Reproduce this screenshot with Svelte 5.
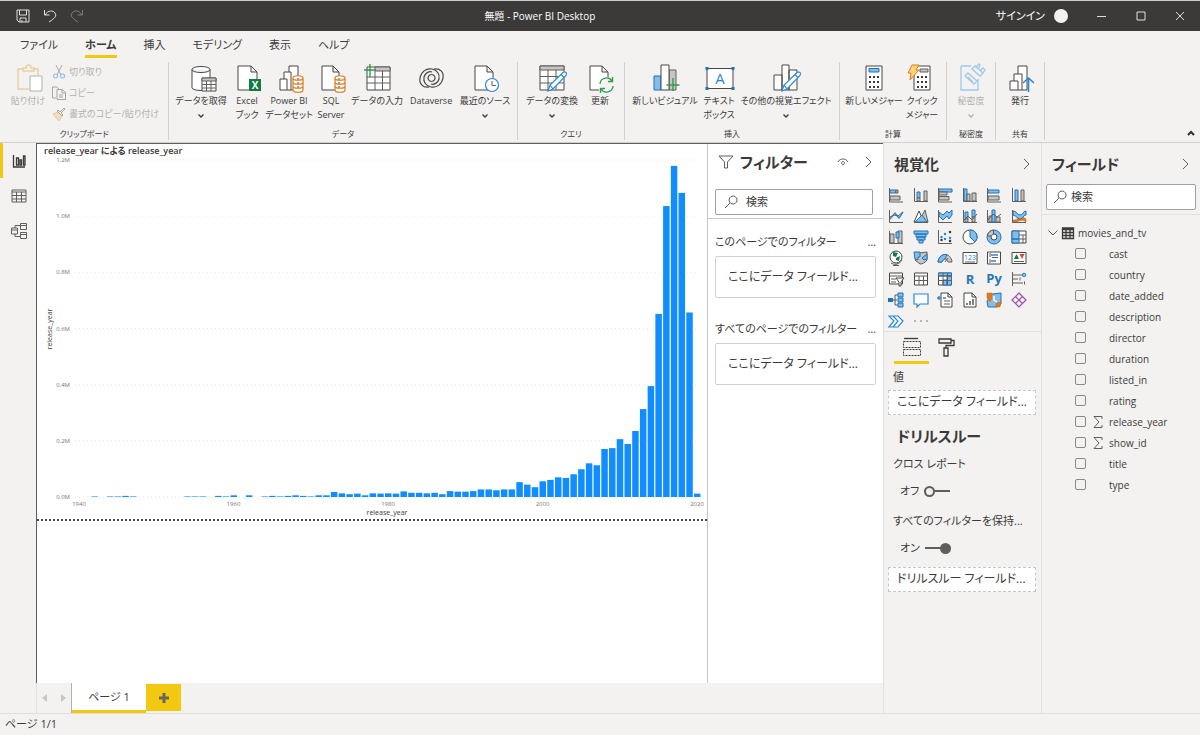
<script lang="ts">
	type Shape = [string, string] | { t: string; x: number; y: number; s: number; c: string };
	type Tool = { icon: string; lines: string[]; size: string; menu?: boolean; off?: boolean };

	const page = 'M4 2h12l6 6v18H4zM16 2v6h6';
	const pencil = 'M10 27l2-6L25 8.500q2-1 3 0t0 3L15 25zM12 21l3 4M23 10.500l3 3';
	const cylinder = 'M18 14c0-3 10-3 10 0v12c0 3-10 3-10 0zM18 14c0 3 10 3 10 0M18 18c0 3 10 3 10 0M18 22c0 3 10 3 10 0';

	const ribbonIcons: Record<string, Shape[]> = {
		paste: [['tan', 'M9 5H4v20h11M19 5h5v6M9 7V4h3c0-4 5-4 5 0h3v3z'], ['pale', 'M16 12h12v15H16z']],
		getData: [['paper', 'M5 5.500v18c0 4 18 4 18 0v-18M5 5.500c0-4 18-4 18 0s-18 4-18 0'], ['paper', 'M15 14h14v13H15z'], ['gray', 'M15 14h14v3H15z'], ['line', 'M15 20.500h14M15 24h14M19.500 17v10M24 17v10']],
		excel: [['paper', 'M5 2h13l6 6v18H5zM18 2v6h6'], ['green', 'M16 15h12v12H16z'], { t: 'X', x: 22, y: 25, s: 10, c: 'white' }],
		dataset: [['paper', 'M5 15h7v11H5zM9 15V8h7v18h-4M14 8V2h9v24h-7'], ['amber', cylinder]],
		sql: [['paper', 'M5 2h11l6 6v18H5zM16 2v6h6'], ['amber', cylinder]],
		enter: [['paper', 'M4 3h23v23H4z'], ['gray', 'M12 3h15v4H12z'], ['line', 'M4 13h23M4 19h23M12 7v19M19.500 7v19'], ['plus', 'M7 0v13M1 6h12']],
		dataverse: [['swirl', 'M12 23C6 24 2 20 3 14 4 8 9 4 15 5c5 1 8 5 7 10-1 4-5 6-8 5'], ['swirl', 'M17 5c6-1 10 3 9 9-1 6-6 10-12 9-5-1-8-5-7-10 1-4 5-6 8-5'], ['swirl', 'M14.500 10.500a3.500 3.500 0 1 0 .1 0']],
		recent: [['paper', page], ['bluePaper', 'M21 14.500a6.500 6.500 0 1 1 0 13 6.500 6.500 0 0 1 0-13z'], ['line', 'M21 17v4.500h4']],
		transform: [['paper', 'M2 2h24v24H2z'], ['gray', 'M2 2h24v4H2z'], ['line', 'M2 12.500h24M2 19h24M10 6v20M18 6v20'], ['bluePaper', pencil]],
		refresh: [['paper', 'M13 26H4V2h12l6 6v5M16 2v6h6'], ['greenLine', 'M14 20a6.500 6.500 0 0 1 12-3M26.500 13v4.500H22M27 22a6.500 6.500 0 0 1-12 3M14.500 29v-4.500H19']],
		visual: [['gray', 'M18 6h7v20h-7z'], ['sky', 'M3 12h7v14H3z'], ['paper', 'M10 1h8v25h-8z'], ['plus', 'M22 14v13M15.500 21h13']],
		textBox: [['paper', 'M2 4.500h26v20H2z'], ['blue', 'M.500 3h3v3h-3zM26.500 3h3v3h-3zM.500 23h3v3h-3zM26.500 23h3v3h-3z'], { t: 'A', x: 15, y: 20, s: 15, c: 'blueText' }],
		moreVisuals: [['paper', 'M2 11h8v15H2zM17 6h8v20h-8zM10 1h7v25h-7z'], ['bluePaper', pencil]],
		calculator: [['paper', 'M6 2h16v24H6z'], ['sky', 'M9 4.500h10V8H9z'], ['dots', 'M9 13h10M9 18h10M9 23h10']],
		quick: [['paper', 'M6 2h16v24H6z'], ['gray', 'M12 5h8v3h-8z'], ['dots', 'M9 13h10M9 18h10M9 23h10'], ['bolt', 'M4 1h7L8 6h3L2 16l1-7H0z']],
		sensitivity: [['paleBlue', 'M4 2h10M21 15v11H4V2M8 12l3-3 9 8-3 3zM11 13l5 5M15 5l3-3 8 7-3 3zM19 3l3-3 1 1-1 3M23 7l3-3 2 2-2 3']],
		publish: [['paper', 'M4 17h8v9H4zM8 17v-7h8v16h-4M12 10V2h9v24h-5'], ['arrow', 'M22.500 28V14M17 19l5.500-5 5.500 5']]
	};

	const groups: { label: string; tools: Tool[] }[] = [
		{
			label: 'データ',
			tools: [
				{ icon: 'getData', lines: ['データを取得'], size: 'md', menu: true },
				{ icon: 'excel', lines: ['Excel', 'ブック'], size: 'xs' },
				{ icon: 'dataset', lines: ['Power BI', 'データセット'], size: 'sm' },
				{ icon: 'sql', lines: ['SQL', 'Server'], size: 'xs' },
				{ icon: 'enter', lines: ['データの入力'], size: 'md' },
				{ icon: 'dataverse', lines: ['Dataverse'], size: 'md' },
				{ icon: 'recent', lines: ['最近のソース'], size: 'md', menu: true }
			]
		},
		{
			label: 'クエリ',
			tools: [
				{ icon: 'transform', lines: ['データの変換'], size: 'ml', menu: true },
				{ icon: 'refresh', lines: ['更新'], size: 'xs' }
			]
		},
		{
			label: '挿入',
			tools: [
				{ icon: 'visual', lines: ['新しいビジュアル'], size: 'lg' },
				{ icon: 'textBox', lines: ['テキスト', 'ボックス'], size: 'xs' },
				{ icon: 'moreVisuals', lines: ['その他の視覚エフェクト'], size: 'xl', menu: true }
			]
		},
		{
			label: '計算',
			tools: [
				{ icon: 'calculator', lines: ['新しいメジャー'], size: 'ml' },
				{ icon: 'quick', lines: ['クイック', 'メジャー'], size: 'xs' }
			]
		},
		{ label: '秘密度', tools: [{ icon: 'sensitivity', lines: ['秘密度'], size: 'xs', menu: true, off: true }] },
		{ label: '共有', tools: [{ icon: 'publish', lines: ['発行'], size: 'xs' }] }
	];

	const menus = ['ファイル', 'ホーム', '挿入', 'モデリング', '表示', 'ヘルプ'];
	let activeMenu = $state('ホーム');

	const visuals: { name: string; shapes: Shape[] }[] = [
		{ name: '積み上げ横棒グラフ', shapes: [['sky', 'M2 3h6v3H2z'], ['gray', 'M8 3h2v3H8zM2 9h10v4H2z'], ['line', 'M1.500 1v14H15']] },
		{ name: '積み上げ縦棒グラフ', shapes: [['sky', 'M4 5h3v6H4z'], ['gray', 'M4 11h3v3H4zM11 4h3v10h-3z'], ['line', 'M1.500 1v13.500H15']] },
		{ name: '集合横棒グラフ', shapes: [['sky', 'M2 2h13v3H2z'], ['gray', 'M2 5h8v3H2zM2 9.500h10V13H2z'], ['line', 'M1.500 1v14H15']] },
		{ name: '集合縦棒グラフ', shapes: [['sky', 'M2 2h3v12H2z'], ['gray', 'M5 7h3v7H5zM10 6h4v8h-4z'], ['line', 'M1.500 1v13.500H15']] },
		{ name: '100% 積み上げ横棒グラフ', shapes: [['sky', 'M2 3h11v3H2z'], ['gray', 'M2 9h11v4H2z'], ['line', 'M1.500 1v14H15']] },
		{ name: '100% 積み上げ縦棒グラフ', shapes: [['sky', 'M4 3h3v11H4z'], ['gray', 'M10 3h3v11h-3z'], ['line', 'M1.500 1v13.500H15']] },
		{ name: '折れ線グラフ', shapes: [['blueLine', 'M2 11l5-6 4 5 4-6'], ['line', 'M1.500 2v12.500H15M2 9l4-2 4 1 5-4']] },
		{ name: '面グラフ', shapes: [['gray', 'M6 14L12 2l3 12z'], ['paper', 'M1 14L6 3l5 11z'], ['sky', 'M2 14l7-7 5 7z'], ['line', 'M1 14.500h14']] },
		{ name: '積み上げ面グラフ', shapes: [['sky', 'M2 4l4 3 4-4 2 2 3-3v5l-3 4-2-3-4 4-4-4z'], ['line', 'M1.500 2v12.500H15']] },
		{ name: '折れ線および積み上げ縦棒', shapes: [['sky', 'M3 4h3v7H3zM10 2h3v7h-3z'], ['gray', 'M3 11h3v3H3zM10 9h3v5h-3z'], ['line', 'M1.500 2v12.500H15M2 12l4-4 4 4 5-6']] },
		{ name: '折れ線および集合縦棒', shapes: [['gray', 'M3 8h3v6H3zM10 9h4v5h-4z'], ['sky', 'M6 2h3v12H6z'], ['line', 'M1.500 2v12.500H15M2 12l5-6 4 3 4-3']] },
		{ name: 'リボン グラフ', shapes: [['orange', 'M2 12c5 0 8-5 13-1v3c-5-4-8 1-13 0z'], ['sky', 'M2 3c4 0 4 4 7 4s3-4 6-4v4c-3 0-3 4-6 4S6 8 2 7z'], ['line', 'M1.500 2v12.500H15']] },
		{ name: 'ウォーターフォール', shapes: [['gray', 'M2 5h4v9H2zM10 2h4v12h-4z'], ['sky', 'M8 3h3v6H8z'], ['line', 'M1.500 2v12.500H15']] },
		{ name: 'じょうごグラフ', shapes: [['sky', 'M1 2h14v3H1zM3 5h10v3H3zM4 8h8v3H4zM6 11h4v3H6z']] },
		{ name: '散布図', shapes: [['line', 'M1.500 1v13.500H15'], ['blueDot', 'M8 5v.1M4.500 8v.1M8 10v.1M13 9v.1'], ['darkDot', 'M13 3v.1M4.500 11v.1M13 12v.1']] },
		{ name: '円グラフ', shapes: [['paper', 'M8 1a7 7 0 1 0 0 14A7 7 0 0 0 8 1z'], ['sky', 'M8 1a7 7 0 0 1 5 12L8 8z']] },
		{ name: 'ドーナツ グラフ', shapes: [['sky', 'M8 1a7 7 0 1 0 0 14A7 7 0 0 0 8 1z'], ['paper', 'M8 5a3 3 0 1 0 0 6 3 3 0 0 0 0-6z'], ['gray', 'M1.500 7a7 7 0 0 1 6-6v4L5 7z']] },
		{ name: 'ツリーマップ', shapes: [['paper', 'M1 2h14v12H1z'], ['sky', 'M1 2h7v8H1zM1 10h7v4H1z'], ['line', 'M8 6h7M8 10h7M12 6v8']] },
		{ name: 'マップ', shapes: [['paper', 'M8 1a6 6 0 1 0 0 12A6 6 0 0 0 8 1z'], ['green', 'M5 2l5 1-2 4-3-1zM8 8l4-2-1 5-3-1z'], ['line', 'M3 13c3 2 8 2 11-3M8 14v2M5 15.500h6']] },
		{ name: '塗り分け地図', shapes: [['gray', 'M6 3l8-1v8c-2 3-5 4-7 4L2 10z'], ['sky', 'M1 2h6v5H5v3L2 9zM9 8l5-4v5l-3 1z']] },
		{ name: 'ゲージ', shapes: [['gray', 'M1 12C2 2 14 2 15 12h-4c-1-4-5-4-6 0z'], ['sky', 'M1 12C2 6 6 4 10 4.500L8 9q-2 0-3 3z'], ['line', 'M8 12l3-4']] },
		{ name: 'カード', shapes: [['paper', 'M1 2.500h14v11H1z'], ['line', 'M3 12h10'], { t: '123', x: 8, y: 10, s: 7, c: 'blueText' }] },
		{ name: '複数の行カード', shapes: [['paper', 'M1.500 2h13v12h-13z'], ['blueLine', 'M5 5h7M5 11h5'], ['line', 'M4 3v4M4 9v4M6 7.500h6']] },
		{ name: 'KPI', shapes: [['paper', 'M1 2.500h14v11H1z'], ['green', 'M3 9l2.500-5L8 9z'], ['red', 'M8.500 4h5L11 9z'], ['line', 'M3 11.500h10']] },
		{ name: 'スライサー', shapes: [['paper', 'M1.500 2h13v11h-13z'], ['line', 'M2 5h12M3 8h5M3 11h5'], ['paper', 'M8 7h8l-3 4v4h-2v-4z']] },
		{ name: 'テーブル', shapes: [['paper', 'M1.500 2h13v12h-13z'], ['line', 'M1.500 5h13M1.500 9.500h13M6 5v9M10.500 5v9']] },
		{ name: 'マトリックス', shapes: [['paper', 'M1.500 2h13v12h-13z'], ['sky', 'M1.500 2h13v3h-13zM10 5h4.500v9H10zM6 9h4v5H6z'], ['line', 'M1.500 5h13M1.500 9.500h13M6 2v12M10.500 2v12']] },
		{ name: 'R スクリプト ビジュアル', shapes: [{ t: 'R', x: 8, y: 13, s: 13, c: 'boldBlue' }] },
		{ name: 'Python ビジュアル', shapes: [{ t: 'Py', x: 8, y: 12, s: 13, c: 'boldBlue' }] },
		{ name: '主要なインフルエンサー', shapes: [['line', 'M1.500 1v14M2 4h9M2 8h5M2 12h10M9 6.500v3M13.500 10.500v3'], ['blueLine', 'M13 2.500a1.500 1.500 0 1 0 .1 0']] },
		{ name: '分解ツリー', shapes: [['line', 'M4 8h5M7 3v10M7 3h3M7 13h3'], ['blue', 'M0 6h5v4H0z'], ['sky', 'M10 1h5v4h-5zM10 6h5v4h-5zM10 11h5v4h-5z']] },
		{ name: 'Q&A', shapes: [['bluePaper', 'M1 2h14v10H7l-3 3v-3H1z']] },
		{ name: 'スマート ナラティブ', shapes: [['paper', 'M4 1h7l4 4v10H4zM11 1v4h4'], ['blueLine', 'M0 6h4M2 4v4M6 6h3'], ['line', 'M7 9h6M7 12h6']] },
		{ name: 'ページ割り付けレポート', shapes: [['paper', 'M2 1h8l4 4v10H2zM10 1v4h4'], ['darkLine', 'M5 11v2M8 9v4M11 7v6']] },
		{ name: 'ArcGIS Maps', shapes: [['sky', 'M1 9l5-7 9-1v11l-4 3H2z'], ['orange', 'M1 1h5v5l-2 4-3-4zM10 11l5-1-1 5h-4z'], ['whiteLine', 'M8 4v4l3 2']] },
		{ name: 'Power Apps', shapes: [['purple', 'M8 1l7 7-7 7-7-7zM4.500 4.500l7 7M11.500 4.500l-7 7']] },
		{ name: 'Power Automate', shapes: [['bluePaper', 'M1 3h9l5 5-5 6H1l5-6zM5 3l5 5-5 6']] }
	];

	const fields = [
		'cast', 'country', 'date_added', 'description', 'director', 'duration',
		'listed_in', 'rating', 'release_year', 'show_id', 'title', 'type'
	];
	const numeric = ['release_year', 'show_id'];

	// year -> total, in thousands
	const early: [number, number][] = [
		[1942, 2], [1944, 2], [1945, 2], [1946, 4], [1947, 2], [1954, 2], [1955, 2], [1956, 2],
		[1958, 4], [1959, 2], [1960, 6], [1962, 6], [1964, 2], [1965, 4], [1966, 2], [1967, 4],
		[1968, 6], [1969, 4], [1970, 2], [1971, 6], [1972, 6]
	];
	const since1973 = [
		18, 13, 10, 12, 6, 13, 12, 13, 12, 20, 15, 15, 13, 15, 10, 21, 19, 19, 21, 27, 27, 24, 27, 27,
		53, 44, 35, 56, 61, 70, 68, 81, 99, 120, 113, 171, 174, 206, 189, 235, 313, 395, 652, 1036,
		1179, 1083, 657, 12
	];
	const bars = [...early, ...since1973.map((v, i): [number, number] => [1973 + i, v])];

	const base = 353;
	const xOf = (year: number) => 42 + ((year - 1940) * 618) / 80;
	const yOf = (v: number) => base - (v * 337) / 1200;
</script>

{#snippet icon(shapes: Shape[], size: number)}
	<svg class="icon" width={size} height={size} viewBox="0 0 {size} {size}" aria-hidden="true">
		{#each shapes as s}
			{#if Array.isArray(s)}
				<path class={s[0]} d={s[1]} />
			{:else}
				<text class={s.c} x={s.x} y={s.y} font-size={s.s} text-anchor="middle">{s.t}</text>
			{/if}
		{/each}
	</svg>
{/snippet}

{#snippet chevron()}
	<svg width="8" height="12" viewBox="0 0 8 12" aria-hidden="true"><path class="line" d="M1 1l5 5-5 5" /></svg>
{/snippet}

{#snippet search(id: string)}
	<div class="search">
		<label for={id} aria-label="検索">
			<svg width="14" height="14" viewBox="0 0 14 14"><path class="line" d="M9 1a4 4 0 1 0 .1 0M6 8l-5 5" /></svg>
		</label>
		<input {id} type="text" placeholder="検索" />
	</div>
{/snippet}

<div class="app">
	<header class="titlebar">
		<div class="quick-access">
			<button aria-label="保存">
				<svg width="14" height="14" viewBox="0 0 14 14"><path d="M1 1h12v12H3l-2-2zM3.500 1v5h7V1M4 13V9h6v4M6 13v-2" /></svg>
			</button>
			<button aria-label="元に戻す">
				<svg width="14" height="14" viewBox="0 0 14 14"><path d="M1.500 1v5h5M2 6c3-5 8-5 10-2s0 5-6 9" /></svg>
			</button>
			<button aria-label="やり直し" class="dim">
				<svg width="14" height="14" viewBox="0 0 14 14"><path d="M12.500 1v5h-5M12 6C9 1 4 1 2 4s0 5 6 9" /></svg>
			</button>
		</div>
		<h1>無題 - Power BI Desktop</h1>
		<div class="window-controls">
			<button class="signin">サインイン <span class="avatar"></span></button>
			<button aria-label="最小化"><svg width="10" height="10" viewBox="0 0 10 10"><path d="M0 5.500h9" /></svg></button>
			<button aria-label="最大化"><svg width="10" height="10" viewBox="0 0 10 10"><path d="M1 1h8v8H1z" /></svg></button>
			<button aria-label="閉じる"><svg width="10" height="10" viewBox="0 0 10 10"><path d="M1 1l8 8M9 1L1 9" /></svg></button>
		</div>
	</header>

	<nav class="menus">
		{#each menus as menu}
			<button class:active={menu === activeMenu} onclick={() => (activeMenu = menu)}>{menu}</button>
		{/each}
	</nav>

	<div class="ribbon">
		<section class="group">
			<div class="tools">
				<button class="tool off sm" disabled>
					{@render icon(ribbonIcons.paste, 28)}
					<span>貼り付け</span>
				</button>
				<div class="clip-list">
					<button disabled>
						<svg width="14" height="14" viewBox="0 0 14 14"><path class="line" d="M4 0l5 10M10 0L5 10" /><path class="bluePaper" d="M3.500 9a2 2 0 1 0 .1 0M10.500 9a2 2 0 1 0 .1 0" /></svg>
						切り取り
					</button>
					<button disabled>
						<svg width="14" height="14" viewBox="0 0 14 14"><path class="line" d="M4 12H.500V1H5l2 2M5 3.500h5l3.500 3v7H5zM10 4v3h3M7 9h4M7 11h4" /></svg>
						コピー
					</button>
					<button disabled>
						<svg width="14" height="14" viewBox="0 0 14 14"><path class="amberFill" d="M1 7l5-2 4 4-3 5z" /><path class="line" d="M5 4l5 5 1-1-2-2 4-4-1-1-4 4-2-2z" /></svg>
						書式のコピー/貼り付け
					</button>
				</div>
			</div>
			<h2>クリップボード</h2>
		</section>
		{#each groups as group}
			<section class="group">
				<div class="tools">
					{#each group.tools as tool}
						<button class="tool {tool.size}" class:off={tool.off} disabled={tool.off}>
							{@render icon(ribbonIcons[tool.icon], 28)}
							{#each tool.lines as line}
								<span>{line}</span>
							{/each}
							{#if tool.menu}
								<svg class="drop" width="6" height="4" viewBox="0 0 6 4" aria-hidden="true"><path d="M.500.500L3 3 5.500.500" /></svg>
							{/if}
						</button>
					{/each}
				</div>
				<h2>{group.label}</h2>
			</section>
		{/each}
		<button class="collapse" aria-label="リボンを折りたたむ">
			<svg width="8" height="6" viewBox="0 0 8 6"><path d="M1 5l3-3 3 3" /></svg>
		</button>
	</div>

	<div class="body">
		<nav class="rail">
			<button class="active" aria-label="レポート">
				<svg width="14" height="14" viewBox="0 0 14 14"><path class="darkLine" d="M1.500 1v12H13M4.500 11V4h2v7zM8 11V6h1.500v5zM11.500 11V2h1.500v9z" /></svg>
			</button>
			<button aria-label="データ">
				<svg width="16" height="14" viewBox="0 0 16 14"><path class="line" d="M1 1h14v12H1zM1 3h14M1 6.500h14M1 10h14M5.500 3v10M10.500 3v10" /></svg>
			</button>
			<button aria-label="モデル">
				<svg width="16" height="16" viewBox="0 0 16 16"><path class="line" d="M.500 5h6v6h-6zM.500 7h6M9.500.500h6v6h-6zM9.500 2.500h6M9.500 9.500h6v6h-6zM9.500 11.500h6M4 5V2.500h5.500M4 11v2.500h5.500" /></svg>
			</button>
		</nav>

		<main>
			<div class="workspace">
				<div class="canvas">
					<svg class="chart" viewBox="0 0 670 375" role="img" aria-label="release_year による release_year">
						<text class="chart-title" x="7" y="10">release_year による release_year</text>
						{#each [0, 200, 400, 600, 800, 1000, 1200] as tick}
							<line class="grid-line" x1="38" x2="661" y1={yOf(tick)} y2={yOf(tick)} />
							<text class="tick" x="33" y={yOf(tick) + 2} text-anchor="end">{(tick / 1000).toFixed(1)}M</text>
						{/each}
						{#each bars as [year, total]}
							<rect class="bar" x={xOf(year) - 3} y={yOf(total)} width="6.500" height={base - yOf(total)} />
						{/each}
						{#each [1940, 1960, 1980, 2000, 2020] as year}
							<text class="tick" x={xOf(year)} y="362" text-anchor="middle">{year}</text>
						{/each}
						<text class="axis" x="350" y="371" text-anchor="middle">release_year</text>
						<text class="axis" transform="translate(15 185) rotate(-90)" text-anchor="middle">release_year</text>
					</svg>
				</div>

				<aside class="filters">
					<div class="pane-head">
						<svg width="16" height="14" viewBox="0 0 16 14" aria-hidden="true"><path class="line" d="M1 1h14L9.500 7v6h-3V7z" /></svg>
						<h2>フィルター</h2>
						<button aria-label="フィルターの表示">
							<svg width="12" height="8" viewBox="0 0 12 8"><path class="line" d="M1 4c2-4 8-4 10 0M6 3.500a1.500 1.500 0 1 0 .1 0" /></svg>
						</button>
						<button aria-label="折りたたむ">{@render chevron()}</button>
					</div>
					{@render search('filter-search')}
					<div class="filter-list">
						<div class="filter-label"><h3>このページでのフィルター</h3><button aria-label="その他">…</button></div>
						<div class="well">ここにデータ フィールド...</div>
						<div class="filter-label"><h3>すべてのページでのフィルター</h3><button aria-label="その他">…</button></div>
						<div class="well">ここにデータ フィールド...</div>
					</div>
				</aside>
			</div>

			<div class="pages">
				<div class="page-nav">
					<button aria-label="前のページ"><svg width="5" height="8" viewBox="0 0 5 8"><path d="M5 0v8L0 4z" /></svg></button>
					<button aria-label="次のページ"><svg width="5" height="8" viewBox="0 0 5 8"><path d="M0 0v8l5-4z" /></svg></button>
				</div>
				<button class="page-tab">ページ 1</button>
				<button class="add-page" aria-label="新しいページ">
					<svg width="10" height="10" viewBox="0 0 10 10"><path d="M5 0v10M0 5h10" /></svg>
				</button>
			</div>
		</main>

		<aside class="visuals">
			<div class="pane-head">
				<h2>視覚化</h2>
				<button aria-label="折りたたむ">{@render chevron()}</button>
			</div>
			<div class="gallery">
				{#each visuals as visual}
					<button aria-label={visual.name}>{@render icon(visual.shapes, 16)}</button>
				{/each}
				<button aria-label="その他のビジュアル">
					<svg width="16" height="16" viewBox="0 0 16 16"><path class="ellipsis" d="M2 8v.1M8 8v.1M14 8v.1" /></svg>
				</button>
			</div>
			<div class="pane-tabs">
				<button class="active" aria-label="フィールド">
					<svg width="18" height="20" viewBox="0 0 18 20"><path class="darkLine" d="M1 1.500h14" /><path class="dashed" d="M.500 4.500h17v6H.500zM.500 12.500h17v6H.500z" /></svg>
				</button>
				<button aria-label="書式">
					<svg width="18" height="20" viewBox="0 0 18 20"><path class="darkLine" d="M1 2h12v4H1zM13 3.500h3v5H8V11M6 11h4v8H6z" /></svg>
				</button>
			</div>
			<div class="settings">
				<h3>値</h3>
				<div class="drop-well">ここにデータ フィールド...</div>
				<h2>ドリルスルー</h2>
				<h3>クロス レポート</h3>
				<label class="switch">オフ <input type="checkbox" role="switch" /></label>
				<h3>すべてのフィルターを保持...</h3>
				<label class="switch">オン <input type="checkbox" role="switch" checked /></label>
				<div class="drop-well">ドリルスルー フィールド...</div>
			</div>
		</aside>

		<aside class="fields">
			<div class="pane-head">
				<h2>フィールド</h2>
				<button aria-label="折りたたむ">{@render chevron()}</button>
			</div>
			{@render search('field-search')}
			<div class="tree">
				<button class="table-name">
					<svg width="10" height="6" viewBox="0 0 10 6" aria-hidden="true"><path class="line" d="M.500.500L5 5 9.500.500" /></svg>
					<svg width="12" height="12" viewBox="0 0 12 12" aria-hidden="true"><path class="darkLine" d="M.500 1h11v10.500H.500zM.500 2.500h11M.500 5.500h11M.500 8.500h11M4 3v8M8 3v8" /></svg>
					movies_and_tv
				</button>
				{#each fields as field}
					<label class="field">
						<input type="checkbox" />
						<span class="sigma">
							{#if numeric.includes(field)}
								<svg width="10" height="12" viewBox="0 0 10 12" aria-hidden="true"><path class="line" d="M9 3V.500H1L6 6l-5 5.500h8V9" /></svg>
							{/if}
						</span>
						{field}
					</label>
				{/each}
			</div>
		</aside>
	</div>

	<footer>ページ 1/1</footer>
</div>

<style>
	:global(body) {
		margin: 0;
	}

	.app {
		display: flex;
		flex-direction: column;
		height: 100vh;
		box-sizing: border-box;
		border-top: 1px solid #c8cfcc;
		background: #f3f2f1;
		color: #3b3a39;
		font-family: 'Open Sans', 'Noto Sans CJK JP', sans-serif;
		font-feature-settings: 'palt';
		font-size: 11px;
		line-height: 14px;
		white-space: nowrap;
	}

	h1, h2, h3 {
		margin: 0;
		font-size: inherit;
		font-weight: 400;
	}

	button {
		display: flex;
		align-items: center;
		justify-content: center;
		padding: 0;
		border: none;
		background: none;
		color: inherit;
		font: inherit;
		font-feature-settings: inherit;
		white-space: nowrap;
		cursor: pointer;
	}

	svg {
		display: block;
		flex-shrink: 0;
		overflow: visible;
		fill: none;
	}

	/* ── Icon strokes and fills ── */
	.line { fill: none; stroke: #605e5c; }
	.darkLine { fill: none; stroke: #3b3a39; stroke-width: 1.3; }
	.paper { fill: #fff; stroke: #484644; }
	.gray { fill: #c8c6c4; stroke: #605e5c; }
	.sky { fill: #83bde9; stroke: #1f73b7; }
	.blue { fill: #1f73b7; }
	.blueLine { fill: none; stroke: #2b88d8; stroke-width: 1.4; }
	.bluePaper { fill: #fff; stroke: #2b88d8; stroke-width: 1.2; }
	.amber { fill: #fff; stroke: #e07b1a; stroke-width: 1.2; }
	.amberFill { fill: #f3c98b; stroke: #e0a04a; }
	.orange { fill: #e07b1a; stroke: #d06a10; stroke-width: 0.5; }
	.green { fill: #107c41; }
	.red { fill: #e0403a; }
	.greenLine, .plus { fill: none; stroke: #2e9c4c; stroke-width: 1.4; }
	.arrow { fill: none; stroke: #2b88d8; stroke-width: 1.6; }
	.swirl { fill: none; stroke: #484644; stroke-width: 1.2; }
	.bolt { fill: #ffd479; stroke: #e07b1a; }
	.tan { fill: none; stroke: #e9cfa4; stroke-width: 1.5; }
	.pale { fill: #fff; stroke: #b3b0ad; }
	.paleBlue { fill: none; stroke: #9ec9ea; stroke-width: 1.3; }
	.purple { fill: none; stroke: #9b4fa8; stroke-width: 1.2; }
	.whiteLine { fill: none; stroke: #fff; stroke-width: 1.5; }
	.dots { fill: none; stroke: #3b3a39; stroke-width: 2; stroke-dasharray: 2 2; }
	.blueDot, .darkDot { stroke: #2b88d8; stroke-width: 2.5; stroke-linecap: round; }
	.darkDot { stroke: #3b3a39; }
	.ellipsis { stroke: #605e5c; stroke-width: 1.5; stroke-linecap: round; }
	.dashed { stroke: #3b3a39; stroke-dasharray: 2 1; }
	.white { fill: #fff; font-weight: 700; }
	.blueText { fill: #2b88d8; }
	.boldBlue { fill: #2775b8; font-weight: 700; }

	/* ── Title bar ── */
	.titlebar {
		display: flex;
		align-items: center;
		height: 30px;
		flex-shrink: 0;
		background: #3b3a39;
		color: #f3f2f1;
	}

	.titlebar h1 {
		flex: 1;
		font-size: 10px;
		text-align: center;
		color: #fff;
	}

	.titlebar svg {
		stroke: #e1dfdd;
	}

	.quick-access {
		display: flex;
		gap: 13px;
		padding-left: 16px;
	}

	.quick-access .dim {
		opacity: 0.4;
	}

	.window-controls {
		display: flex;
		align-items: center;
		gap: 29px;
		padding-right: 15px;
	}

	.signin {
		gap: 9px;
		color: #fff;
	}

	.avatar {
		width: 14px;
		height: 14px;
		border-radius: 50%;
		background: #f3f2f1;
	}

	/* ── Ribbon ── */
	.menus {
		display: flex;
		gap: 27px;
		height: 27px;
		flex-shrink: 0;
		padding-left: 20px;
	}

	.menus button {
		padding-top: 3px;
		border-bottom: 3px solid transparent;
	}

	.menus .active {
		border-bottom-color: #f2c811;
		font-weight: 700;
	}

	.ribbon {
		display: flex;
		flex-shrink: 0;
		height: 78px;
		padding: 4px 0 2px;
		border-bottom: 1px solid #d2d0ce;
		font-size: 9px;
	}

	.group {
		display: flex;
		flex-direction: column;
		padding: 2px 5px 0;
		border-right: 1px solid #d2d0ce;
	}

	.group h2 {
		margin-top: auto;
		font-size: 8px;
		line-height: 12px;
		text-align: center;
	}

	.tools {
		display: flex;
		align-items: flex-start;
	}

	.tool {
		flex-direction: column;
	}

	.tool .icon {
		margin-bottom: 2px;
	}

	.xs { width: 38px; }
	.sm { width: 46px; }
	.md { width: 54px; }
	.ml { width: 58px; }
	.lg { width: 70px; }
	.xl { width: 96px; }

	.off {
		color: #b3b0ad;
	}

	.drop {
		margin-top: 6px;
		stroke: currentColor;
		stroke-width: 1.3;
	}

	.clip-list {
		display: flex;
		flex-direction: column;
		align-items: flex-start;
		gap: 7px;
		padding: 1px 4px 0 1px;
	}

	.clip-list button {
		gap: 3px;
		color: #b3b0ad;
	}

	.clip-list svg {
		opacity: 0.5;
	}

	.collapse {
		align-self: flex-end;
		margin: 0 5px 4px auto;
	}

	.collapse svg {
		stroke: #323130;
		stroke-width: 2;
	}

	/* ── Body ── */
	.body {
		display: flex;
		flex: 1;
		min-height: 0;
	}

	.rail {
		width: 36px;
	}

	.rail button {
		box-sizing: border-box;
		width: 100%;
		height: 35px;
		border-left: 3px solid transparent;
		padding-right: 2px;
	}

	.rail .active {
		border-left-color: #f2c811;
	}

	main {
		display: flex;
		flex-direction: column;
		flex: 1;
		min-width: 0;
	}

	.workspace {
		display: flex;
		flex: 1;
		min-height: 0;
		border-top: 1px solid #605e5c;
		border-left: 1px solid #605e5c;
		background: #fff;
	}

	.canvas {
		flex: 1;
		min-width: 0;
	}

	.chart {
		width: 100%;
		border-bottom: 2px dotted #484644;
	}

	.chart-title {
		fill: #3b3a39;
		font-size: 9px;
		font-weight: 600;
	}

	.tick {
		fill: #777;
		font-size: 6px;
	}

	.axis {
		fill: #3b3a39;
		font-size: 7px;
	}

	.grid-line {
		stroke: #e6e6e6;
		stroke-dasharray: 1 3;
	}

	.bar {
		fill: #118dff;
	}

	/* ── Panes ── */
	.pane-head {
		display: flex;
		align-items: center;
		height: 41px;
	}

	.pane-head h2 {
		flex: 1;
		font-size: 15px;
		font-weight: 700;
	}

	.search {
		display: flex;
		align-items: center;
		box-sizing: border-box;
		height: 26px;
		border: 1px solid #a19f9d;
		border-radius: 2px;
		background: #fff;
	}

	.search label {
		padding: 0 8px;
	}

	.search input {
		flex: 1;
		min-width: 0;
		padding: 0;
		border: none;
		outline: none;
		background: none;
		color: inherit;
		font: inherit;
	}

	.search input::placeholder {
		color: #3b3a39;
		opacity: 1;
	}

	.filters {
		width: 175px;
		border-left: 1px solid #c8c6c4;
	}

	.filters .pane-head {
		gap: 6px;
		height: 36px;
		margin-bottom: 9px;
		padding: 0 10px;
	}

	.filters .pane-head button:last-child {
		margin-left: 10px;
	}

	.filters .search {
		margin: 0 10px 3px 7px;
	}

	.filter-list {
		padding: 16px 7px 0;
		border-top: 1px solid #c8c6c4;
	}

	.filter-label {
		display: flex;
		justify-content: space-between;
		margin-bottom: 7px;
	}

	.well {
		display: flex;
		align-items: center;
		box-sizing: border-box;
		height: 42px;
		margin-bottom: 24px;
		padding-left: 12px;
		border: 1px solid #d2d0ce;
		border-radius: 2px;
		font-size: 12px;
	}

	.pages {
		display: flex;
		height: 30px;
		flex-shrink: 0;
		border-left: 1px solid #e1dfdd;
	}

	.page-nav {
		display: flex;
		justify-content: center;
		gap: 14px;
		width: 34px;
		border-right: 1px solid #b3b0ad;
	}

	.page-nav svg {
		fill: #c8c6c4;
	}

	.page-tab {
		width: 74px;
		border-bottom: 3px solid #f2c811;
		background: #fff;
	}

	.add-page {
		width: 35px;
		margin: 1px 0 2px;
		background: #f2c811;
	}

	.add-page svg {
		stroke: #6b6558;
		stroke-width: 3;
	}

	.visuals {
		box-sizing: border-box;
		width: 158px;
		border-left: 1px solid #e1dfdd;
	}

	.visuals .pane-head {
		padding: 0 10px;
	}

	.gallery {
		display: grid;
		grid-template-columns: repeat(6, 1fr);
		grid-auto-rows: 21px;
		padding-right: 10px;
		border-bottom: 1px solid #e1dfdd;
	}

	.pane-tabs {
		display: flex;
		padding-left: 10px;
	}

	.pane-tabs button {
		box-sizing: border-box;
		width: 35px;
		height: 32px;
		border-bottom: 3px solid transparent;
	}

	.pane-tabs .active {
		border-bottom-color: #f2c811;
	}

	.settings {
		display: flex;
		flex-direction: column;
		padding: 6px 5px 0 4px;
	}

	.settings h3 {
		padding-left: 5px;
	}

	.settings h2 {
		padding: 14px 0 14px 9px;
		font-size: 15px;
		font-weight: 700;
	}

	.drop-well {
		margin-top: 6px;
		padding: 4px 0 5px 8px;
		border: 1px dashed #c8c6c4;
		background: #fff;
		font-size: 12px;
	}

	.switch {
		display: flex;
		align-items: center;
		gap: 5px;
		height: 14px;
		padding: 13px 0 16px 12px;
	}

	.switch + .drop-well {
		margin-top: -4px;
	}

	.switch input {
		display: flex;
		align-items: center;
		appearance: none;
		width: 26px;
		height: 12px;
		margin: 0;
		background: linear-gradient(#605e5c, #605e5c) center / 100% 2px no-repeat;
	}

	.switch input::before {
		content: '';
		box-sizing: border-box;
		width: 11px;
		height: 11px;
		border: 2px solid #605e5c;
		border-radius: 50%;
		background: #f3f2f1;
	}

	.switch input:checked {
		justify-content: flex-end;
	}

	.switch input:checked::before {
		background: #605e5c;
	}

	.fields {
		box-sizing: border-box;
		width: 159px;
		border-left: 1px solid #e1dfdd;
	}

	.fields .pane-head {
		padding: 0 10px;
	}

	.fields .search {
		margin: 0 4px 4px;
	}

	.fields .search label {
		padding: 0 4px 0 6px;
	}

	.tree {
		padding-top: 7px;
		border-top: 1px solid #e1dfdd;
		font-size: 10px;
	}

	.table-name {
		gap: 4px;
		height: 21px;
		padding-left: 6px;
	}

	.field {
		display: flex;
		align-items: center;
		height: 21px;
		padding-left: 33px;
	}

	.field input {
		box-sizing: border-box;
		appearance: none;
		width: 11px;
		height: 11px;
		margin: 0;
		border: 1px solid #8a8886;
		border-radius: 2px;
	}

	.field input:checked {
		background: #605e5c;
	}

	.sigma {
		display: flex;
		justify-content: center;
		width: 23px;
	}

	footer {
		flex-shrink: 0;
		padding: 3px 5px 4px;
		border-top: 1px solid #e1dfdd;
	}
</style>
